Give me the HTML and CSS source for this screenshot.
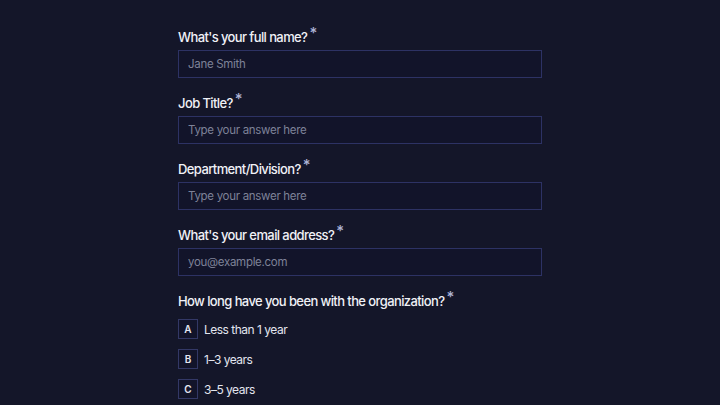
FILE: index.html
```html
<!DOCTYPE html>
<html lang="en">
<head>
    <meta charset="UTF-8">
    <meta name="viewport" content="width=device-width, initial-scale=1.0">
    <title>Employee Survey</title>
    <link rel="stylesheet" href="styles.css">
</head>
<body>
    <form class="form">
        <div class="field">
            <label class="label">What's your full name?<span class="req">*</span></label>
            <input class="input" type="text" placeholder="Jane Smith">
        </div>
        <div class="field">
            <label class="label">Job Title?<span class="req">*</span></label>
            <input class="input" type="text" placeholder="Type your answer here">
        </div>
        <div class="field">
            <label class="label">Department/Division?<span class="req">*</span></label>
            <input class="input" type="text" placeholder="Type your answer here">
        </div>
        <div class="field">
            <label class="label">What's your email address?<span class="req">*</span></label>
            <input class="input" type="email" placeholder="you@example.com">
        </div>
        <div class="field">
            <label class="label">How long have you been with the organization?<span class="req">*</span></label>
            <div class="options">
                <div class="option"><span class="key">A</span>Less than 1 year</div>
                <div class="option"><span class="key">B</span>1–3 years</div>
                <div class="option"><span class="key">C</span>3–5 years</div>
            </div>
        </div>
    </form>
</body>
</html>
```

FILE: styles.css
```css
body {
    margin: 0;
    background-color: #141629;
    font-family: Inter, "Noto Sans", sans-serif;
    color: #f0f1f7;
}
.form {
    width: 364px;
    margin: 0 auto;
    padding-top: 28px;
    display: flex;
    flex-direction: column;
    gap: 16px;
}
.field {
    display: flex;
    flex-direction: column;
    gap: 3px;
}
.label {
    font-size: 13px;
    font-weight: 500;
    letter-spacing: -0.6px;
    line-height: 19px;
}
.req {
    color: #aeb4d6;
    font-size: 15px;
    line-height: 0;
    position: relative;
    top: -4px;
    margin-left: 2px;
}
.input {
    height: 28px;
    box-sizing: border-box;
    background-color: #12142a;
    border: 1px solid #2d3264;
    color: #eceef6;
    font-family: inherit;
    font-size: 11.5px;
    letter-spacing: -0.3px;
    padding: 0 9px;
    outline: none;
}
.input::placeholder {
    color: #7e8298;
}
.options {
    display: flex;
    flex-direction: column;
    gap: 10px;
    padding-top: 5px;
}
.option {
    display: flex;
    align-items: center;
    gap: 6px;
    font-size: 12px;
    letter-spacing: -0.5px;
    color: #e3e5ef;
}
.key {
    width: 20px;
    height: 20px;
    box-sizing: border-box;
    border: 1px solid #333866;
    background-color: #12142a;
    display: flex;
    justify-content: center;
    align-items: center;
    font-size: 10px;
    font-weight: 600;
    letter-spacing: 0;
}
```
